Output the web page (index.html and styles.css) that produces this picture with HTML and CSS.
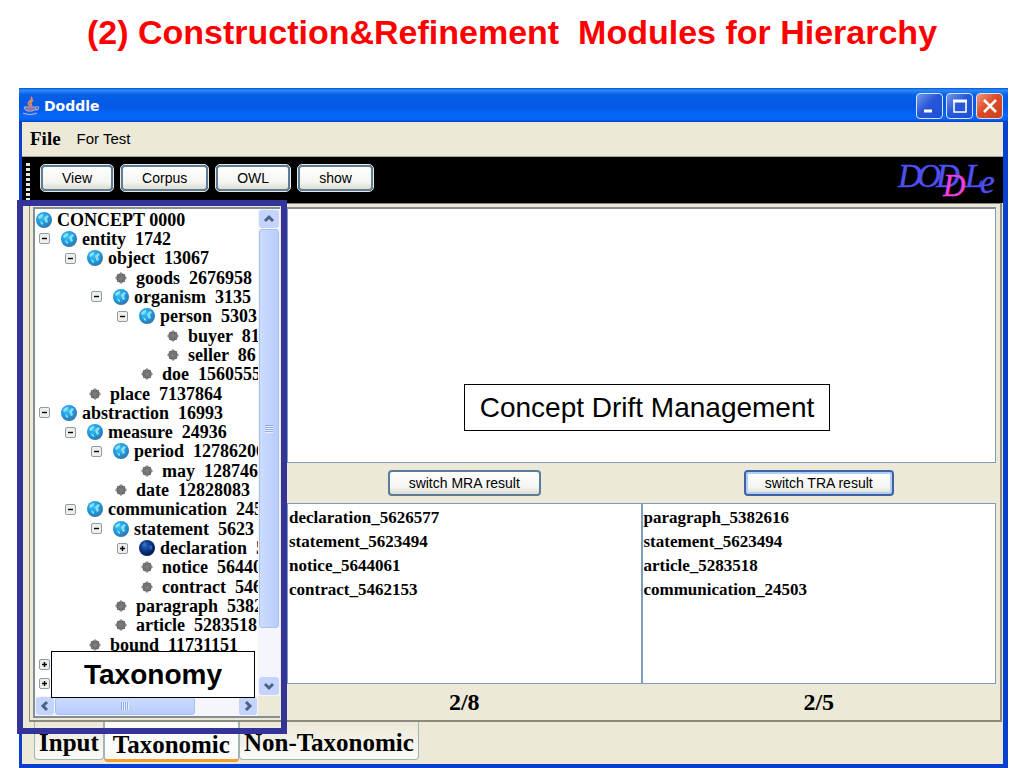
FILE: index.html
```
<!DOCTYPE html>
<html lang="en">

<head>
    <meta charset="UTF-8">
    <meta name="viewport" content="width=device-width, initial-scale=1.0">
    <title>Doddle</title>
    <link rel="stylesheet" href="styles.css">
</head>

<body>
    <!-- shared tree icons -->
    <svg class="defs" width="0" height="0" aria-hidden="true">
        <defs>
            <radialGradient id="sea" cx="0.4" cy="0.35" r="0.7">
                <stop offset="0" stop-color="#3cc4f6" />
                <stop offset="0.6" stop-color="#1c96dc" />
                <stop offset="1" stop-color="#3c6c9c" />
            </radialGradient>
            <radialGradient id="night" cx="0.4" cy="0.35" r="0.7">
                <stop offset="0" stop-color="#2468c0" />
                <stop offset="0.5" stop-color="#0c3484" />
                <stop offset="1" stop-color="#041448" />
            </radialGradient>
            <symbol id="globe" viewBox="0 0 18 18">
                <circle cx="9" cy="9" r="8" fill="url(#sea)" />
                <path d="M3 6 Q5 3 8 3 L8 5 L6 7 L4 8 Z M9 7 L12 4 L14 5 L12 8 L13 11 L11 12 L10 10 Z M5 10 L8 12 L8 14 L6 13 Z" fill="#a4ecf4" opacity="0.8" />
            </symbol>
            <symbol id="darkglobe" viewBox="0 0 18 18">
                <circle cx="9" cy="9" r="8" fill="url(#night)" />
                <path d="M4 6 L7 3 L8 5 L6 8 Z M11 7 L14 6 L14 10 L12 11 Z" fill="#4484cc" opacity="0.6" />
            </symbol>
            <symbol id="leaf" viewBox="0 0 18 18">
                <circle cx="9" cy="9" r="4.8" fill="#686868" />
                <path d="M9 3 V15 M3 9 H15 M5 5 L13 13 M13 5 L5 13" stroke="#808080" />
            </symbol>
            <symbol id="minus" viewBox="0 0 13 13">
                <rect x="1.5" y="1.5" width="10" height="10" rx="1.5" fill="#f0eee8" stroke="#8c9cac" />
                <path d="M4 6.5 H9" stroke="#000" stroke-width="1.4" />
            </symbol>
            <symbol id="plus" viewBox="0 0 13 13">
                <rect x="1.5" y="1.5" width="10" height="10" rx="1.5" fill="#f0eee8" stroke="#8c9cac" />
                <path d="M4 6.5 H9 M6.5 4 V9" stroke="#000" stroke-width="1.4" />
            </symbol>
        </defs>
    </svg>

    <h1 class="heading">(2) Construction&amp;Refinement  Modules for Hierarchy</h1>

    <div class="window">
        <div class="titlebar">
            <svg class="java" viewBox="0 0 20 20" width="20" height="20" aria-hidden="true">
                <path d="M10 1 Q12 3 9 5 Q6 7 9 10 M12 4 Q8 7 11 10" fill="none" stroke="#e08860" stroke-width="1.8" />
                <path d="M3 11 H15 Q14 15 11 15 H7 Q4 15 3 11 Z" fill="#5c5ca0" stroke="#c8b8c8" />
                <path d="M15 11 Q19 10 17 13 Q16 14 14 14 M2 17 Q9 20 16 17" fill="none" stroke="#b8a8d0" stroke-width="1.2" />
                <path d="M5 13 H13" stroke="#e08888" />
            </svg>
            <span class="caption">Doddle</span>
            <button class="winbtn" aria-label="Minimize">
                <svg viewBox="0 0 24 24" width="24" height="24"><path d="M6 17 H14" stroke="#fff" stroke-width="3" /></svg>
            </button>
            <button class="winbtn" aria-label="Maximize">
                <svg viewBox="0 0 24 24" width="24" height="24"><path d="M6 7 H18 V18 H6 Z" fill="none" stroke="#fff" stroke-width="1.6" /><path d="M5 7 H19" stroke="#fff" stroke-width="3" /></svg>
            </button>
            <button class="winbtn close" aria-label="Close">
                <svg viewBox="0 0 24 24" width="24" height="24"><path d="M6 6 L18 18 M18 6 L6 18" stroke="#fff" stroke-width="2.6" /></svg>
            </button>
        </div>

        <div class="menubar">
            <button class="menu file">File</button>
            <button class="menu">For Test</button>
        </div>

        <div class="toolbar">
            <span class="grip"></span>
            <button class="tool">View</button>
            <button class="tool">Corpus</button>
            <button class="tool">OWL</button>
            <button class="tool">show</button>
            <svg class="logo" viewBox="0 0 102 40" width="102" height="40" role="img" aria-label="DODDLe">
                <g font-family="Liberation Serif, serif" font-style="italic" font-size="33" fill="#5050f0" stroke="#5050f0" stroke-width="0.4">
                    <text x="1" y="27">D</text>
                    <text x="20" y="27">O</text>
                    <text x="39" y="27">D</text>
                    <text x="68" y="27">L</text>
                    <text x="83" y="33">e</text>
                    <text x="46" y="36" font-size="31" fill="#f040e0" stroke="#f040e0">D</text>
                </g>
            </svg>
        </div>

        <div class="workspace">
            <div class="treepane">
                <ul class="tree">
                    <li class="root"><svg class="icon"><use href="#globe" /></svg>CONCEPT 0000</li>
                    <li class="l1"><button class="toggle" aria-label="Collapse"><svg><use href="#minus" /></svg></button><svg class="icon"><use href="#globe" /></svg>entity  1742</li>
                    <li class="l2"><button class="toggle" aria-label="Collapse"><svg><use href="#minus" /></svg></button><svg class="icon"><use href="#globe" /></svg>object  13067</li>
                    <li class="l3 leaf"><svg class="icon"><use href="#leaf" /></svg>goods  2676958</li>
                    <li class="l3"><button class="toggle" aria-label="Collapse"><svg><use href="#minus" /></svg></button><svg class="icon"><use href="#globe" /></svg>organism  3135</li>
                    <li class="l4"><button class="toggle" aria-label="Collapse"><svg><use href="#minus" /></svg></button><svg class="icon"><use href="#globe" /></svg>person  5303</li>
                    <li class="l5 leaf"><svg class="icon"><use href="#leaf" /></svg>buyer  81</li>
                    <li class="l5 leaf"><svg class="icon"><use href="#leaf" /></svg>seller  86</li>
                    <li class="l4 leaf"><svg class="icon"><use href="#leaf" /></svg>doe  1560555</li>
                    <li class="l2 leaf"><svg class="icon"><use href="#leaf" /></svg>place  7137864</li>
                    <li class="l1"><button class="toggle" aria-label="Collapse"><svg><use href="#minus" /></svg></button><svg class="icon"><use href="#globe" /></svg>abstraction  16993</li>
                    <li class="l2"><button class="toggle" aria-label="Collapse"><svg><use href="#minus" /></svg></button><svg class="icon"><use href="#globe" /></svg>measure  24936</li>
                    <li class="l3"><button class="toggle" aria-label="Collapse"><svg><use href="#minus" /></svg></button><svg class="icon"><use href="#globe" /></svg>period  12786206</li>
                    <li class="l4 leaf"><svg class="icon"><use href="#leaf" /></svg>may  128746</li>
                    <li class="l3 leaf"><svg class="icon"><use href="#leaf" /></svg>date  12828083</li>
                    <li class="l2"><button class="toggle" aria-label="Collapse"><svg><use href="#minus" /></svg></button><svg class="icon"><use href="#globe" /></svg>communication  24503</li>
                    <li class="l3"><button class="toggle" aria-label="Collapse"><svg><use href="#minus" /></svg></button><svg class="icon"><use href="#globe" /></svg>statement  5623</li>
                    <li class="l4"><button class="toggle" aria-label="Expand"><svg><use href="#plus" /></svg></button><svg class="icon"><use href="#darkglobe" /></svg>declaration  5626577</li>
                    <li class="l4 leaf"><svg class="icon"><use href="#leaf" /></svg>notice  5644061</li>
                    <li class="l4 leaf"><svg class="icon"><use href="#leaf" /></svg>contract  5462153</li>
                    <li class="l3 leaf"><svg class="icon"><use href="#leaf" /></svg>paragraph  5382</li>
                    <li class="l3 leaf"><svg class="icon"><use href="#leaf" /></svg>article  5283518</li>
                    <li class="l2 leaf"><svg class="icon"><use href="#leaf" /></svg>bound  11731151</li>
                    <li class="l1"><button class="toggle" aria-label="Expand"><svg><use href="#plus" /></svg></button></li>
                    <li class="l1"><button class="toggle" aria-label="Expand"><svg><use href="#plus" /></svg></button></li>
                </ul>
                <div class="vscroll">
                    <button class="arrow" aria-label="Scroll up"><svg viewBox="0 0 18 18"><path d="M5 11 L9 7 L13 11" /></svg></button>
                    <div class="thumb"><span class="ridges"></span></div>
                    <div class="track"></div>
                    <button class="arrow" aria-label="Scroll down"><svg viewBox="0 0 18 18"><path d="M5 7 L9 11 L13 7" /></svg></button>
                </div>
                <div class="hscroll">
                    <button class="arrow" aria-label="Scroll left"><svg viewBox="0 0 18 18"><path d="M11 5 L7 9 L11 13" /></svg></button>
                    <div class="thumb"><span class="ridges"></span></div>
                    <div class="track"></div>
                    <button class="arrow" aria-label="Scroll right"><svg viewBox="0 0 18 18"><path d="M7 5 L11 9 L7 13" /></svg></button>
                </div>
            </div>

            <div class="drift">
                <div class="canvas">
                    <div class="note concept">Concept Drift Management</div>
                </div>
                <div class="switches">
                    <div><button class="switch">switch MRA result</button></div>
                    <div><button class="switch focused">switch TRA result</button></div>
                </div>
                <div class="lists">
                    <ul class="list">
                        <li>declaration_5626577</li>
                        <li>statement_5623494</li>
                        <li>notice_5644061</li>
                        <li>contract_5462153</li>
                    </ul>
                    <ul class="list">
                        <li>paragraph_5382616</li>
                        <li>statement_5623494</li>
                        <li>article_5283518</li>
                        <li>communication_24503</li>
                    </ul>
                </div>
                <div class="counts">
                    <div>2/8</div>
                    <div>2/5</div>
                </div>
            </div>

            <div class="highlight"></div>
            <div class="note taxonomy">Taxonomy</div>
        </div>

        <div class="tabs" role="tablist">
            <button class="tab" role="tab">Input</button>
            <button class="tab active" role="tab" aria-selected="true">Taxonomic</button>
            <button class="tab" role="tab">Non-Taxonomic</button>
        </div>
    </div>
</body>

</html>
```
FILE: styles.css
```
* {
    box-sizing: border-box;
}

body {
    margin: 0;
    min-height: 100vh;
    display: flex;
    flex-direction: column;
    background-color: #fff;
    font-family: "Liberation Sans", Arial, sans-serif;
    font-size: 14px;
    color: #000;
}

button {
    font-family: inherit;
    font-size: inherit;
    color: inherit;
    padding: 0;
    border: none;
    background: none;
}

ul {
    list-style: none;
    margin: 0;
    padding: 0;
}

.defs {
    position: absolute;
}

.heading {
    margin: 0;
    height: 88px;
    padding-top: 12px;
    text-align: center;
    white-space: pre;
    font-size: 34px;
    line-height: 40px;
    color: #f00;
}

/* window frame */
.window {
    flex: 1;
    display: flex;
    flex-direction: column;
    margin: 0 16px 0 19px;
    border: solid #0840d0;
    border-width: 0 5px 4px 3px;
    background-color: #ece9d8;
}

.titlebar {
    display: flex;
    align-items: center;
    gap: 3px;
    height: 34px;
    margin: 0 -5px 0 -3px;
    padding: 1px 5px 0 2px;
    background: linear-gradient(#0a50d8 0, #2a8cf8 6%, #0560e8 20%, #0458e4 55%, #0468fc 80%, #0464f8 92%, #0444c0 100%);
}

.caption {
    flex: 1;
    font-family: "DejaVu Sans", sans-serif;
    font-size: 14px;
    font-weight: bold;
    color: #fff;
}

.winbtn {
    width: 27px;
    height: 26px;
    display: flex;
    align-items: center;
    justify-content: center;
    border: 1px solid #d8e4fc;
    border-radius: 4px;
    background: linear-gradient(135deg, #7898ec, #2858d8 45%, #1c50d4);
}

.close {
    background: linear-gradient(135deg, #f09880, #dc4c24 45%, #cc4020);
}

.menubar {
    display: flex;
    align-items: center;
    gap: 16px;
    height: 35px;
    padding: 0 0 1px 8px;
    border-bottom: 1px solid #aca899;
}

.menu {
    font-size: 15px;
}

.file {
    font-family: "Liberation Serif", "Times New Roman", serif;
    font-size: 19px;
    font-weight: bold;
}

.toolbar {
    display: flex;
    align-items: center;
    gap: 8px;
    height: 46px;
    padding: 0 4px;
    background-color: #000;
}

.grip {
    width: 4px;
    height: 40px;
    margin-right: 3px;
    align-self: flex-end;
    background: repeating-linear-gradient(#e4e4e0 0, #e4e4e0 3px, #000 3px, #000 5px);
}

.tool,
.switch {
    height: 26px;
    padding: 0 19px;
    border: 2px solid #5c7c9c;
    border-radius: 4px;
    background: linear-gradient(#fff, #f4f4f0 70%, #dcdcd0);
}

.tool {
    outline: 1px solid #ece9d8;
    margin-bottom: 4px;
}

.logo {
    margin-left: auto;
}

/* main area */
.workspace {
    position: relative;
    flex: 1;
    display: flex;
    margin: 0 1px 0 7px;
    padding: 3px 4px 2px 3px;
    border: solid #8c8a78;
    border-width: 1px 2px 2px 1px;
}

.treepane {
    flex: 0 0 247px;
    display: grid;
    grid-template-columns: 1fr 22px;
    grid-template-rows: 1fr 20px;
    margin-right: 7px;
    border: 2px solid #848c94;
    border-right: none;
}

.tree {
    min-width: 0;
    overflow: hidden;
    display: grid;
    grid-auto-rows: 1fr;
    padding: 1px 0 3px;
    background-color: #fff;
    font-family: "Liberation Serif", "Times New Roman", serif;
    font-size: 18px;
    font-weight: bold;
    line-height: 18px;
}

.tree li {
    display: flex;
    align-items: center;
    white-space: pre;
}

.l1 {
    padding-left: 3px;
}

.l2 {
    padding-left: 29px;
}

.l3 {
    padding-left: 55px;
}

.l4 {
    padding-left: 81px;
}

.l5 {
    padding-left: 107px;
}

.toggle {
    width: 13px;
    height: 13px;
    margin-right: 9px;
}

.toggle svg {
    display: block;
    width: 13px;
    height: 13px;
}

.icon {
    flex: none;
    width: 18px;
    height: 18px;
    margin-right: 4px;
}

.leaf .icon {
    margin-left: 22px;
    margin-right: 6px;
}

/* scroll bars */
.vscroll,
.hscroll {
    display: flex;
    gap: 1px;
    padding: 1px;
    background-color: #f4f6fc;
}

.vscroll {
    flex-direction: column;
    align-items: stretch;
}

.arrow {
    flex: none;
    min-width: 18px;
    height: 18px;
    border-radius: 3px;
    background-color: #c4d4fc;
}

.arrow svg {
    display: block;
    width: 18px;
    height: 18px;
    margin: 0 auto;
    fill: none;
    stroke: #4c6484;
    stroke-width: 3;
}

.thumb {
    display: flex;
    align-items: center;
    justify-content: center;
    border: 1px solid #a8c0f0;
    border-radius: 3px;
    background: linear-gradient(90deg, #ccdcff, #b8ccfc);
}

.vscroll .thumb {
    flex: 17;
}

.vscroll .track {
    flex: 2;
}

.hscroll .thumb {
    flex: 10;
    background: linear-gradient(#ccdcff, #b8ccfc);
}

.hscroll .track {
    flex: 3;
}

.ridges {
    width: 8px;
    height: 8px;
    background: repeating-linear-gradient(#90acec 0, #90acec 1px, #e8f0ff 1px, #e8f0ff 2px);
}

.hscroll .ridges {
    background: repeating-linear-gradient(90deg, #90acec 0, #90acec 1px, #e8f0ff 1px, #e8f0ff 2px);
}

/* right side */
.drift {
    flex: 1;
    display: flex;
    flex-direction: column;
}

.canvas {
    position: relative;
    flex: 7;
    border: 1px solid #7f9db9;
    border-top: 2px solid #848c94;
    background-color: #fff;
}

.switches,
.lists,
.counts {
    display: grid;
    grid-template-columns: 1fr 1fr;
    text-align: center;
}

.switches {
    height: 40px;
    align-items: center;
}

.focused {
    border-color: #3c64a4;
    box-shadow: inset 0 0 0 2px #b4ccf4;
}

.lists {
    flex: 5;
    text-align: left;
}

.list {
    padding: 2px 1px;
    border: 1px solid #7f9db9;
    background-color: #fff;
    font-family: "Liberation Serif", "Times New Roman", serif;
    font-size: 17px;
    font-weight: bold;
    line-height: 24px;
}

.counts {
    height: 34px;
    font-family: "Liberation Serif", "Times New Roman", serif;
    font-size: 24px;
    font-weight: bold;
    line-height: 36px;
}

/* callouts over the window */
.note {
    position: absolute;
    display: flex;
    align-items: center;
    justify-content: center;
    height: 47px;
    border: 1px solid #000;
    background-color: #fff;
    font-size: 28px;
    white-space: nowrap;
}

.concept {
    top: 175px;
    left: 176px;
    width: 366px;
}

.taxonomy {
    left: 21px;
    bottom: 22px;
    width: 204px;
    font-weight: bold;
}

.highlight {
    position: absolute;
    top: -4px;
    left: -13px;
    bottom: -14px;
    width: 270px;
    border: 6px solid #333399;
    pointer-events: none;
    z-index: 1;
}

.tabs {
    display: flex;
    align-items: flex-start;
    height: 42px;
    padding-left: 12px;
    font-family: "Liberation Serif", "Times New Roman", serif;
    font-size: 25px;
    font-weight: bold;
}

.tab {
    height: 38px;
    padding: 4px 4px 0;
    border: 1px solid #a0b4b4;
    border-top: none;
    border-radius: 0 0 4px 4px;
    background: linear-gradient(#ece9d8, #fafaf8);
    font-weight: bold;
}

.active {
    height: 40px;
    padding: 8px 8px 0;
    border-bottom: 3px solid #f0a030;
    background: #fbfbfa;
}
```
